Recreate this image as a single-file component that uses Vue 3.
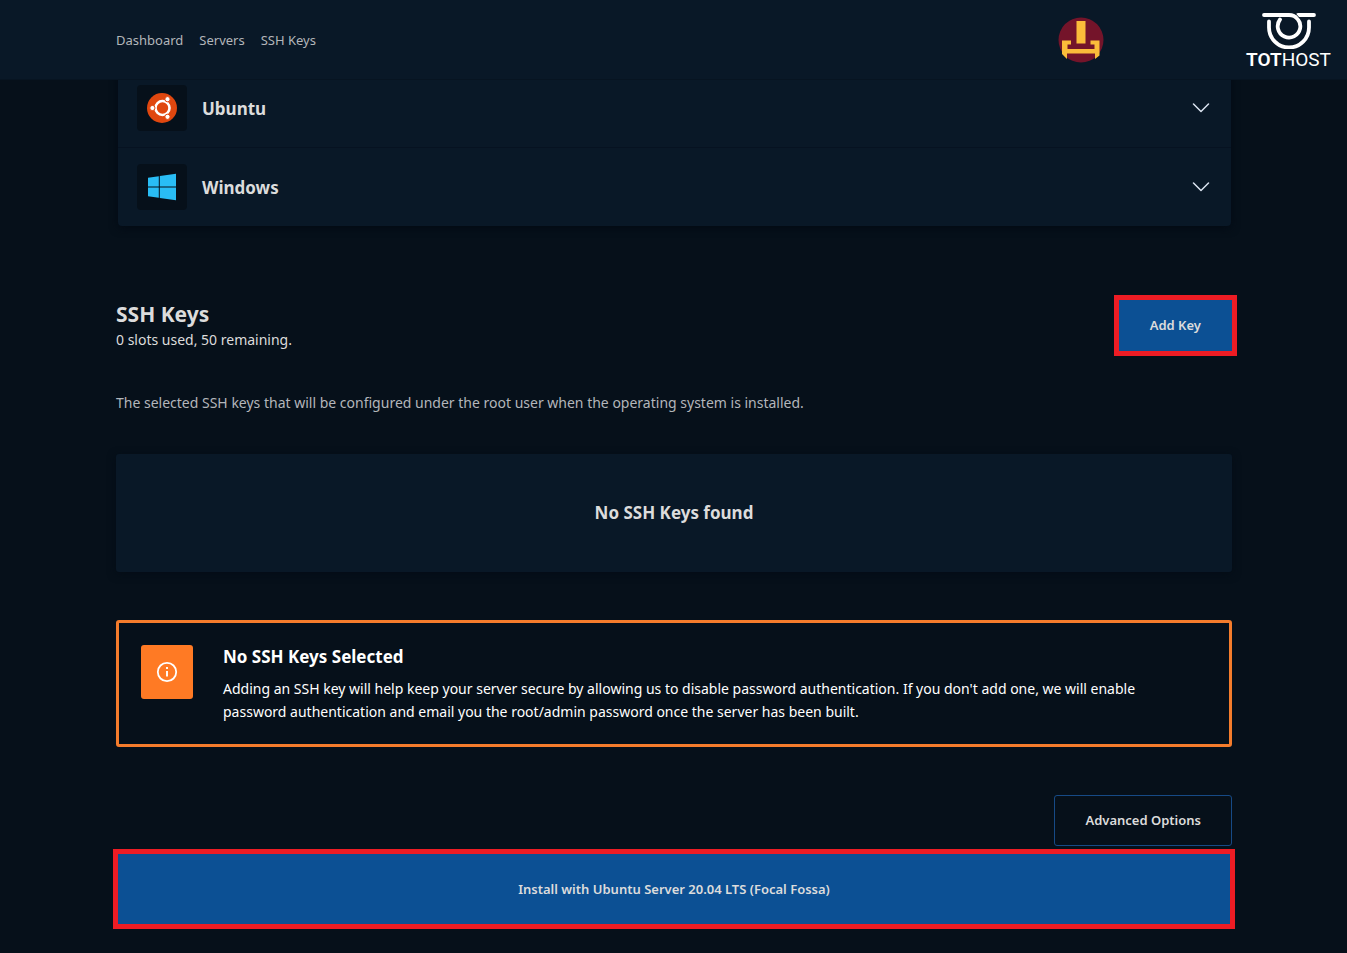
<script setup>
const nav = ['Dashboard', 'Servers', 'SSH Keys']
const systems = [
  { id: 'ubuntu', name: 'Ubuntu' },
  { id: 'windows', name: 'Windows' },
]
</script>

<template>
  <div class="page">
    <header class="topbar">
      <nav class="nav" aria-label="Main">
        <a v-for="item in nav" :key="item" href="#">{{ item }}</a>
      </nav>
      <button class="avatar" type="button" aria-label="Account">
        <svg viewBox="0 0 46 46" aria-hidden="true">
          <circle cx="23" cy="23" r="22.5" fill="#74142a" />
          <path d="M18.500 4h9v22.500h-9zM4 23.500h9v4h-3.500v4.500h27v-4.500h-4v-4h9v15l-4.500 3.500v-5.500h-28v5.500l-5-5z" fill="#fbbc3a" />
        </svg>
      </button>
      <a class="brand" href="#" aria-label="TOTHOST">
        <svg viewBox="0 0 56 38" aria-hidden="true" fill="none" stroke="#fff" stroke-linecap="round">
          <path d="M8 10.500v6a20 20 0 0 0 40 0v-6" stroke-width="3.800" />
          <path d="M3 4H28a11.300 11.300 0 1 1-9 4.500" stroke-width="3.800" />
          <path d="M37 4h16" stroke-width="3.800" />
          <path d="M33 1l6 6.500" stroke="#091827" stroke-width="0.900" />
        </svg>
        <span class="wordmark"><b>TOT</b>HOST</span>
      </a>
    </header>

    <main class="content">
      <section class="systems" aria-label="Operating systems">
        <button v-for="os in systems" :key="os.id" class="system" type="button" aria-expanded="false">
          <span class="tile">
            <svg v-if="os.id === 'ubuntu'" viewBox="0 0 30 30" aria-hidden="true">
              <circle cx="15" cy="15" r="15" fill="#e0470f" />
              <circle cx="15.500" cy="15" r="7" fill="none" stroke="#fff" stroke-width="2.600" />
              <g fill="#fff" stroke="#e0470f" stroke-width="1">
                <circle cx="5.400" cy="15" r="2.600" />
                <circle cx="20.500" cy="6.200" r="2.600" />
                <circle cx="20.500" cy="23.800" r="2.600" />
              </g>
            </svg>
            <svg v-else viewBox="0 0 30 30" aria-hidden="true">
              <path d="M1 5.800l10.800-1.600v10.300H1zM12.800 4L29 1.700v12.800H12.800zM1 15.500h10.800v10.300L1 24.300zM12.800 15.500H29v12.700L12.800 26z" fill="#29bdf5" />
            </svg>
          </span>
          <span class="system-name">{{ os.name }}</span>
          <svg class="chevron" viewBox="0 0 18 10" aria-hidden="true">
            <path d="M1.500 1l7.500 7.500L16.500 1" fill="none" stroke="#dbe3f0" stroke-width="1.500" stroke-linecap="round" stroke-linejoin="round" />
          </svg>
        </button>
      </section>

      <section class="keys-head">
        <div>
          <h2>SSH Keys</h2>
          <p>0 slots used, 50 remaining.</p>
        </div>
        <button class="btn primary marked" type="button">Add Key</button>
      </section>
      <p class="lead">The selected SSH keys that will be configured under the root user when the operating system is installed.</p>

      <section class="empty"><h3>No SSH Keys found</h3></section>

      <section class="notice">
        <span class="notice-icon">
          <svg viewBox="0 0 22 22" fill="none" stroke="#fff" aria-hidden="true">
            <circle cx="11" cy="11" r="9.200" stroke-width="1.800" />
            <path d="M11 10v5.500M11 6v2" stroke-width="1.900" />
          </svg>
        </span>
        <div>
          <h3>No SSH Keys Selected</h3>
          <p>Adding an SSH key will help keep your server secure by allowing us to disable password authentication. If you don't add one, we will enable password authentication and email you the root/admin password once the server has been built.</p>
        </div>
      </section>

      <div class="actions">
        <button class="btn outline" type="button">Advanced Options</button>
        <button class="btn primary install" type="button">Install with Ubuntu Server 20.04 LTS (Focal Fossa)</button>
      </div>
    </main>
  </div>
</template>

<style>
body {
  margin: 0;
  background: #06101a;
}
</style>

<style scoped>
.page {
  color: #dcdcdc;
  font: 14px/23px "Segoe UI", "Noto Sans", "Open Sans", sans-serif;
}
h2, h3, p { margin: 0; }
button { font: inherit; color: inherit; cursor: pointer; }
.topbar {
  position: sticky;
  top: 0;
  z-index: 2;
  display: flex;
  align-items: center;
  box-sizing: border-box;
  height: 80px;
  padding: 1px 16px 0 116px;
  background: #091827;
  border-bottom: 1px solid #071421;
}
.nav { display: flex; gap: 16px; flex: 1; }
.nav a { color: #b3b6ba; text-decoration: none; font-size: 13px; }
.avatar {
  width: 46px;
  height: 46px;
  margin-right: 142px;
  padding: 0;
  border: 0;
  background: none;
}
.avatar svg { display: block; width: 100%; }
.brand {
  display: flex;
  flex-direction: column;
  align-items: center;
  width: 85px;
  color: #fff;
  text-decoration: none;
}
.brand svg { width: 56px; height: 38px; }
.wordmark { font: 400 19px/21px Roboto, sans-serif; }
.wordmark b { font-weight: 600; }
.content { padding: 0 115px 24px 116px; }
.systems {
  margin: -11px 1px 0 2px;
  background: #091827;
  border-radius: 4px;
  box-shadow: 0 2px 8px #030a14;
}
.system {
  display: flex;
  align-items: center;
  width: 100%;
  height: 79px;
  padding: 0 21px 0 19px;
  border: 0;
  border-bottom: 1px solid #061221;
  background: none;
  text-align: left;
}
.system:last-child { height: 78px; border-bottom: 0; }
.tile {
  display: grid;
  place-items: center;
  width: 50px;
  height: 46px;
  margin-right: 15px;
  border-radius: 4px;
  background: #06101a;
}
.tile svg { width: 30px; height: 30px; }
.system-name { flex: 1; font-size: 17px; font-weight: 700; }
.chevron { width: 18px; height: 10px; }
.keys-head {
  display: flex;
  justify-content: space-between;
  align-items: center;
  margin-top: 74px;
}
h2 { font-size: 21px; line-height: 28px; }
h3 { font-size: 17px; line-height: 24px; }
.btn {
  height: 51px;
  padding: 0 30px;
  border: 1px solid #0c5094;
  border-radius: 3px;
  font-size: 13px;
  font-weight: 600;
}
.primary { background: #0c5094; }
.marked { border-radius: 0; outline: 5px solid #ed1c24; }
.outline { background: none; border-color: #164a86; }
.lead { margin-top: 40px; color: #b3b6ba; }
.empty {
  display: grid;
  place-items: center;
  height: 118px;
  margin-top: 40px;
  background: #091827;
  border-radius: 3px;
  box-shadow: 0 2px 8px #040c16;
}
.notice {
  display: flex;
  gap: 30px;
  margin-top: 48px;
  padding: 22px 56px 21px 22px;
  border: 3px solid #f47c2c;
  border-radius: 3px;
  color: #fff;
}
.notice-icon {
  display: grid;
  place-items: center;
  flex: none;
  width: 52px;
  height: 54px;
  border-radius: 3px;
  background: #ff7a24;
}
.notice-icon svg { width: 22px; height: 22px; }
.notice p { margin-top: 8px; }
.actions {
  display: flex;
  flex-direction: column;
  align-items: flex-end;
  gap: 6px;
  margin-top: 48px;
}
.install {
  width: 100%;
  height: 74px;
  border-radius: 0;
  outline: 5px solid #ed1c24;
  outline-offset: -2px;
}
</style>
